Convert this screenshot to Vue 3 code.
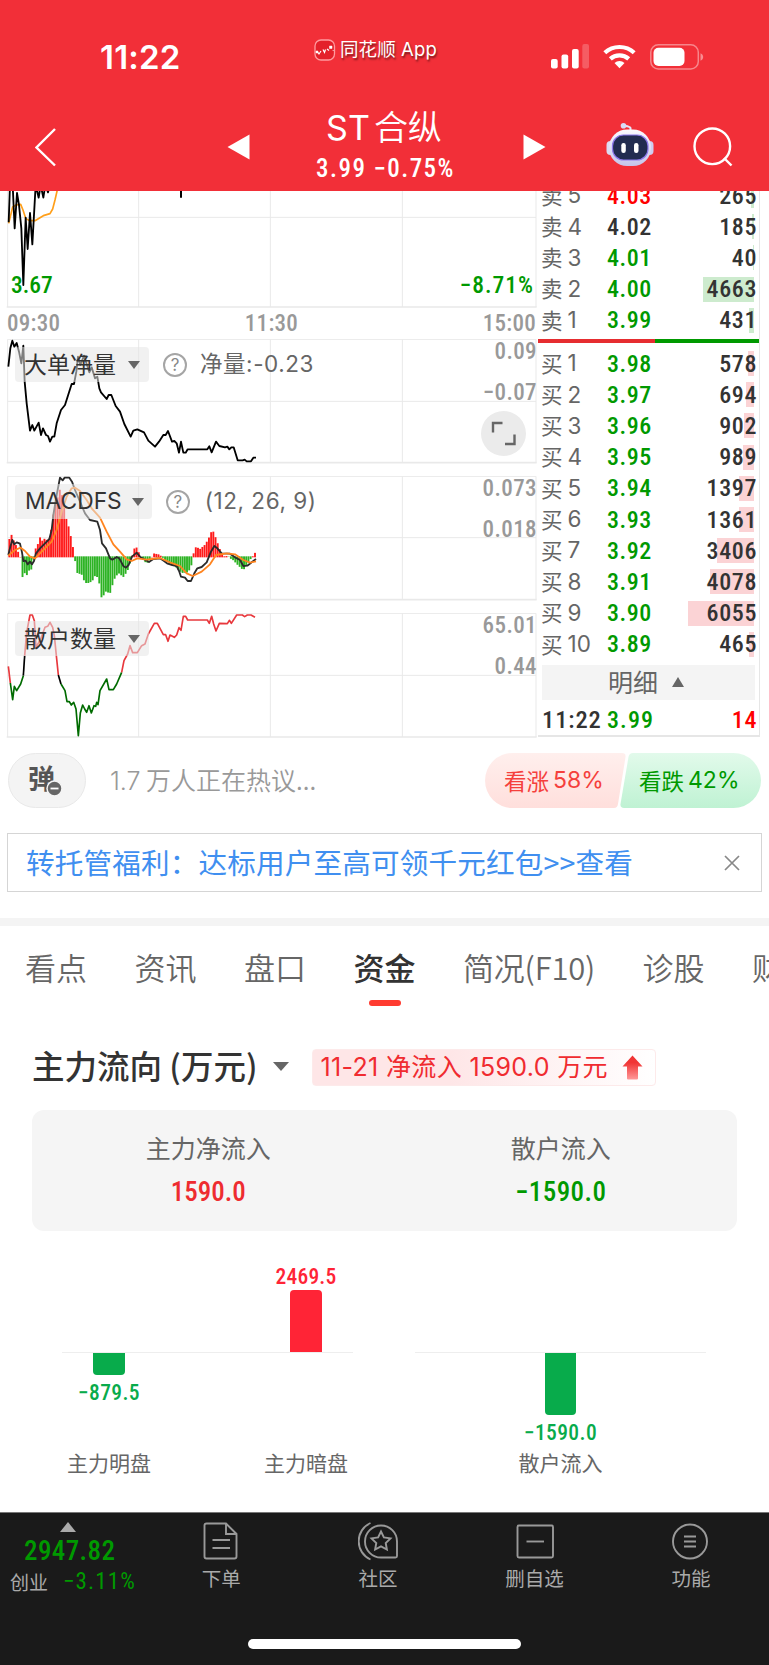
<template>
  <div class="app">
    <header class="header">
      <div class="status-bar">
        <span class="clock">11:22</span>
        <div class="app-tag">
          <svg class="app-logo" width="22" height="22" viewBox="0 0 22 22">
            <rect x="1" y="1" width="19.500" height="20" rx="6" fill="#e4202a" stroke="#ff9a9e" stroke-width="1.300" />
            <path d="M2 13.500h2l1 1.500 2-3" fill="none" stroke="#fff" stroke-width="1.100" />
            <path d="M9 10.500l1.500 3 1-3M13 10l2 1.500" fill="none" stroke="#fff" stroke-width="1.200" />
            <path d="M15.500 7h2.500v2.500h-2.500zM2 12h2v2H2zM18.500 11.500h1.500" fill="#fff" stroke="#fff" stroke-width=".5" />
          </svg>
          <span>同花顺 App</span>
        </div>
        <div class="status-icons">
          <svg width="39" height="25" viewBox="0 0 39 25" fill="#fff">
            <rect x="0" y="15" width="6.700" height="9.500" rx="2" />
            <rect x="10.500" y="10.500" width="6.700" height="14" rx="2" />
            <rect x="21" y="5" width="6.700" height="19.500" rx="2" />
            <rect x="31.300" y="0" width="6.700" height="24.500" rx="2" opacity=".22" />
          </svg>
          <svg width="34" height="25" viewBox="0 0 34 25" fill="none" stroke="#fff" stroke-width="4.200">
            <path d="M1.800 8.800a21.500 21.500 0 0 1 29.400 0" />
            <path d="M7.300 14.900a13.500 13.500 0 0 1 18.400 0" />
            <path d="M16.500 24.200l-5-5.300a7.300 7.300 0 0 1 10 0z" fill="#fff" stroke="none" />
          </svg>
          <svg width="54" height="26" viewBox="0 0 54 26">
            <rect x=".8" y=".8" width="47.500" height="24.200" rx="7.500" fill="none" stroke="#fff" stroke-opacity=".42" stroke-width="1.500" />
            <rect x="3.500" y="3.800" width="31" height="18.200" rx="5" fill="#fff" />
            <path d="M50.500 9.200c3.600 1.500 3.600 6 0 7.500z" fill="#fff" opacity=".45" />
          </svg>
        </div>
      </div>

      <div class="title-bar">
        <svg class="back" width="22" height="40" viewBox="0 0 22 40">
          <path d="M20 2L1.500 20.500l18.500 18" fill="none" stroke="#fff" stroke-width="2.400" />
        </svg>
        <svg class="prev" width="23" height="26" viewBox="0 0 23 26"><path d="M.5 13L22.500.5v25z" fill="#fff" /></svg>
        <div class="stock">
          <div class="stock-name"><span class="latin">ST</span>合纵</div>
          <div class="stock-price num">3.99 −0.75%</div>
        </div>
        <svg class="next" width="23" height="26" viewBox="0 0 23 26"><path d="M22.500 13L.5.5v25z" fill="#fff" /></svg>
        <svg class="robot" width="48" height="44" viewBox="0 0 48 44">
          <defs>
            <linearGradient id="shell" x1="0" y1="0" x2="0" y2="1">
              <stop offset="0" stop-color="#fbfaff" />
              <stop offset="1" stop-color="#c5c4ea" />
            </linearGradient>
          </defs>
          <path d="M24.500 8V5q-1-1.500-5-2" fill="none" stroke="#e6e4f7" stroke-width="2" />
          <circle cx="17.500" cy="2.800" r="2.800" fill="#d9dcf6" />
          <rect x=".5" y="18" width="8" height="14" rx="4" fill="#dcdaf2" />
          <rect x="39.500" y="18" width="8" height="14" rx="4" fill="#cfcdf0" />
          <rect x="3" y="6.500" width="42" height="36.500" rx="18" fill="url(#shell)" />
          <rect x="6.500" y="12" width="35.500" height="25" rx="11" fill="#222c50" stroke="#8c78ea" stroke-width="1.200" />
          <rect x="15.300" y="20" width="4.500" height="10" rx="2.200" fill="#fff" />
          <rect x="28" y="20" width="4.500" height="10" rx="2.200" fill="#fff" />
        </svg>
        <svg class="search" width="40" height="40" viewBox="0 0 40 40" fill="none" stroke="#fff" stroke-width="2.400">
          <circle cx="19.300" cy="19.300" r="17.800" />
          <path d="M31 31l7.500 7.500" />
        </svg>
      </div>
    </header>

    <section class="market">
      <div class="charts">
        <div class="panel price-panel">
          <svg width="538" height="117" viewBox="0 18 1614 351" fill="none" stroke-linejoin="round">
            <path class="grid-line" d="M23 0V366M416 0V366M811 0V366M1207 0V366M1608 0V366M23 97H1608" />
            <path class="grid-line bold" d="M20 366H1610" />
            <path d="M26 115L38 66 48 60 62 58 69 75 77 100 88 107H105L130 92 150 86 158 72 165 45 173 10" stroke="#ff9f1a" stroke-width="5" />
            <path d="M26 112L30 0H38L44 130 51 24 57 60 64 130 70 300 77 98 83 192 90 84 97 178 107 0 116 38 122 0 130 38 136 0 144 22 150 0" stroke="#000" stroke-width="5.500" />
            <path d="M543 0V38" stroke="#000" stroke-width="6" />
          </svg>
          <span class="low num">3.67</span>
          <span class="low-pct num">−8.71%</span>
        </div>
        <div class="times num">
          <span>09:30</span><span>11:30</span><span>15:00</span>
        </div>

        <div class="panel">
          <svg width="538" height="125" viewBox="0 462 1614 375" fill="none" stroke-linejoin="round">
            <path class="grid-line" d="M23 463V833M416 463V833M811 463V833M1207 463V833M1608 463V833M23 463H1608M23 649H1608" />
            <path class="grid-line bold" d="M20 833H1610" />
            <path :d="netPath" stroke="#000" stroke-width="5.500" />
          </svg>
          <div class="indicator">
            <span class="pill"><span>大单净量</span><i class="caret"></i></span>
            <span class="help">?</span>
            <span class="param">净量:-0.23</span>
          </div>
          <span class="axis top num">0.09</span>
          <span class="axis mid num">−0.07</span>
          <span class="expand">
            <svg width="25" height="25" viewBox="0 0 25 25" fill="none" stroke="#666" stroke-width="2.400">
              <path d="M2 11.500V2h9.500M14 23h9.500v-9.500" />
            </svg>
          </span>
        </div>

        <div class="panel">
          <svg width="538" height="125" viewBox="0 33 1614 375" fill="none" stroke-linejoin="round">
            <path class="grid-line" d="M23 34V404M416 34V404M811 34V404M1207 34V404M1608 34V404M23 34H1608M23 218H1608" />
            <path class="grid-line bold" d="M20 404H1610" />
            <rect
              v-for="b in macdBars"
              :key="b.x"
              :x="b.x - 2.800"
              :y="b.h > 0 ? 277 - b.h : 274"
              width="5.700"
              :height="Math.abs(b.h)"
              :fill="b.h > 0 ? '#ff1a1a' : '#2db324'"
            />
            <path :d="difPath" stroke="#2b2b2b" stroke-width="5.500" />
            <path :d="deaPath" stroke="#ff841f" stroke-width="5.500" />
          </svg>
          <div class="indicator">
            <span class="pill latin">MACDFS<i class="caret"></i></span>
            <span class="help">?</span>
            <span class="param macd-param">(12, 26, 9)</span>
          </div>
          <span class="axis top num">0.073</span>
          <span class="axis mid num">0.018</span>
        </div>

        <div class="panel last">
          <svg width="538" height="125" viewBox="0 442 1614 375" fill="none" stroke-linejoin="round" stroke-width="5">
            <path class="grid-line" d="M23 443V814M416 443V814M811 443V814M1207 443V814M1608 443V814M23 443H1608M23 629H1608" />
            <path class="grid-line bold" d="M20 814H1610" />
            <path v-for="(s, i) in retailPaths" :key="i" :d="s.d" :stroke="s.color" />
          </svg>
          <div class="indicator">
            <span class="pill"><span>散户数量</span><i class="caret"></i></span>
          </div>
          <span class="axis top num">65.01</span>
          <span class="axis mid num">0.44</span>
        </div>
      </div>

      <div class="book">
        <div class="sells">
          <div v-for="row in sells" :key="row.label" class="row">
            <span class="level"><span>卖</span><b>{{ row.label }}</b></span>
            <span class="price num" :class="row.tone">{{ row.price }}</span>
            <span class="bar sell" :style="{ width: volWidth(row.vol) }"></span>
            <span class="vol num">{{ row.vol }}</span>
          </div>
        </div>
        <div class="ratio"><i></i></div>
        <div v-for="row in buys" :key="row.label" class="row">
          <span class="level"><span>买</span><b>{{ row.label }}</b></span>
          <span class="price num">{{ row.price }}</span>
          <span class="bar buy" :style="{ width: volWidth(row.vol) }"></span>
          <span class="vol num">{{ row.vol }}</span>
        </div>
        <div class="detail"><span>明细</span><i></i></div>
        <div class="row tick">
          <span class="level num">11:22</span>
          <span class="price num">3.99</span>
          <span class="vol num up">14</span>
        </div>
      </div>
    </section>

    <section class="talk">
      <div class="bullet">
        弹
        <svg width="17" height="17" viewBox="0 0 17 17">
          <circle cx="8.500" cy="8.500" r="7.500" fill="#666" stroke="#f4f4f4" stroke-width="1.500" />
          <path d="M4.500 8.500h8" stroke="#fff" stroke-width="1.800" />
        </svg>
      </div>
      <span class="talk-text"><span class="latin">1.7</span> 万人正在热议...</span>
      <div class="votes">
        <svg class="vote-bg" width="276" height="55" viewBox="0 0 276 55">
          <defs>
            <linearGradient id="rise" x1="0" y1="0" x2="0" y2="1">
              <stop offset="0" stop-color="#ffefed" />
              <stop offset="1" stop-color="#ffdfdc" />
            </linearGradient>
            <linearGradient id="fall" x1="0" y1="0" x2="0" y2="1">
              <stop offset="0" stop-color="#e2faeb" />
              <stop offset="1" stop-color="#bff2d3" />
            </linearGradient>
          </defs>
          <path d="M27.500 0H137q4 0 3.500 4L133 51q-.6 4-4 4H27.500a27.500 27.500 0 0 1 0-55z" fill="url(#rise)" />
          <path d="M148 0h100.500a27.500 27.500 0 0 1 0 55H139q-4 0-3.500-4L143.500 4q.7-4 4.500-4z" fill="url(#fall)" />
        </svg>
        <span class="vote rise"><span>看涨</span><b>58%</b></span>
        <span class="vote fall"><span>看跌</span><b>42%</b></span>
      </div>
    </section>

    <div class="notice">
      <span>转托管福利：达标用户至高可领千元红包&gt;&gt;查看</span>
      <svg width="16" height="16" viewBox="0 0 16 16"><path d="M1 1l14 14M15 1L1 15" stroke="#888" stroke-width="1.700" /></svg>
    </div>

    <nav class="tabs">
      <span v-for="tab in tabs" :key="tab" :class="{ active: tab === '资金' }">{{ tab }}</span>
    </nav>

    <section class="flow">
      <div class="flow-head">
        <h2>主力流向<span> (万元)</span></h2>
        <i class="caret"></i>
        <div class="flow-badge">
          <span>11-21 净流入 1590.0 万元</span>
          <svg width="21" height="25" viewBox="0 0 21 25">
            <defs>
              <linearGradient id="arrow" x1="0" y1="0" x2="0" y2="1">
                <stop offset=".3" stop-color="#f03535" />
                <stop offset="1" stop-color="#f99" />
              </linearGradient>
            </defs>
            <path d="M10.500.5l10 11h-4.500v12q0 1-1 1h-9q-1 0-1-1v-12H.5z" fill="url(#arrow)" />
          </svg>
        </div>
      </div>

      <div class="summary">
        <div><p>主力净流入</p><strong class="num up">1590.0</strong></div>
        <div><p>散户流入</p><strong class="num down">−1590.0</strong></div>
      </div>

      <div class="flow-chart">
        <div v-for="(group, i) in flowGroups" :key="i" class="group">
          <div v-for="item in group" :key="item.name" class="item" :class="item.value > 0 ? 'pos' : 'neg'">
            <div class="upper">
              <template v-if="item.value > 0">
                <span class="num">{{ item.value.toFixed(1) }}</span>
                <i :style="{ height: item.height + 'px' }"></i>
              </template>
            </div>
            <div class="lower">
              <template v-if="item.value < 0">
                <i :style="{ height: item.height + 'px' }"></i>
                <span class="num">−{{ Math.abs(item.value).toFixed(1) }}</span>
              </template>
            </div>
            <p>{{ item.name }}</p>
          </div>
        </div>
      </div>
    </section>

    <footer class="footer">
      <div class="footer-row">
        <div class="index">
          <i></i>
          <strong class="num">2947.82</strong>
          <div class="index-line"><span>创业</span><em class="num">−3.11%</em></div>
        </div>
        <div class="nav-item">
          <svg width="40" height="40" viewBox="0 0 40 40">
            <path d="M5.500 2.500h19.500l10.500 10.500v22.500q0 2-2 2h-28q-2 0-2-2V4.500q0-2 2-2zM25 2.500V13h10.500M11.500 19H29M11.500 27H29" />
          </svg>
          <span>下单</span>
        </div>
        <div class="nav-item">
          <svg width="40" height="40" viewBox="0 0 40 40">
            <path d="M39 20.500v14.500q0 1.500-1.500 1.500H23A16 16 0 1 1 39 20.500z" />
            <path d="M12.500 2a20 20 0 0 0 0 36.500" />
            <path d="M23 10.500l2.900 6 6.600.9-4.800 4.600 1.200 6.500-5.900-3.100-5.900 3.100 1.200-6.500-4.800-4.600 6.600-.9z" />
          </svg>
          <span>社区</span>
        </div>
        <div class="nav-item">
          <svg width="40" height="40" viewBox="0 0 40 40">
            <rect x="3.500" y="4.500" width="35.500" height="32" rx="1.500" />
            <path d="M12.500 20.500H30" />
          </svg>
          <span>删自选</span>
        </div>
        <div class="nav-item">
          <svg width="40" height="40" viewBox="0 0 40 40">
            <circle cx="19" cy="20.500" r="17" />
            <path d="M13 15.500h12M13 20.500h12M13 25.500h12" />
          </svg>
          <span>功能</span>
        </div>
      </div>
      <div class="home-bar"></div>
    </footer>
  </div>
</template>

<script setup>
const sells = [
  { label: 5, price: '4.03', vol: 265, tone: 'up' },
  { label: 4, price: '4.02', vol: 185, tone: 'flat' },
  { label: 3, price: '4.01', vol: 40 },
  { label: 2, price: '4.00', vol: 4663 },
  { label: 1, price: '3.99', vol: 431 }
]

const buys = [
  { label: 1, price: '3.98', vol: 578 },
  { label: 2, price: '3.97', vol: 694 },
  { label: 3, price: '3.96', vol: 902 },
  { label: 4, price: '3.95', vol: 989 },
  { label: 5, price: '3.94', vol: 1397 },
  { label: 6, price: '3.93', vol: 1361 },
  { label: 7, price: '3.92', vol: 3406 },
  { label: 8, price: '3.91', vol: 4078 },
  { label: 9, price: '3.90', vol: 6055 },
  { label: 10, price: '3.89', vol: 465 }
]

const volWidth = (vol) => Math.max(1, (vol / 6055) * 66) + 'px'

const tabs = ['看点', '资讯', '盘口', '资金', '简况(F10)', '诊股', '财务']

const flowGroups = [
  [
    { name: '主力明盘', value: -879.5, height: 22 },
    { name: '主力暗盘', value: 2469.5, height: 62 }
  ],
  [{ name: '散户流入', value: -1590, height: 62 }]
]

const netPath =
  'M25 545L31 490 37 467 43 485 50 474 57 500 64 535 70 482 74 590 80 655 90 737 97 720 103 737 116 713 123 750 129 730 138 750 144 753 150 770 157 755 163 755 170 715 183 675 195 660 215 597 222 597 229 560 234 515 241 540 252 512 268 562 275 547 285 580 292 575 298 610 303 622 320 642 326 630H334L347 663 360 680 373 717 392 755 400 737 412 733 432 742 445 767 465 785 477 770 490 750H497L504 738 516 770 523 768 530 775 537 803 543 770 550 803H557L563 793H622L628 784 635 802 648 770 658 783 675 787 682 785 688 793 694 787 701 787 713 826H728L734 824 740 829H753L760 818H768'

const difPath =
  'M25 270L31 245 37 225 43 238 50 232 60 236 66 262 70 288 77 287 83 298 90 290 96 298 102 288 108 265 120 250 135 235 148 222 155 195 160 150 170 90 180 38 188 46 194 38H208L216 50 225 75 240 110 255 145 270 165 292 170 300 195 306 235 318 250 330 280 337 284 350 276 358 280 370 303 378 308 386 300 396 275 410 263 420 275 436 285 447 291 460 282 480 280 492 288 503 296 517 300 530 303 538 320 543 335 555 338 563 348H573L583 325 592 310 605 306 620 292 632 262 643 243 652 250 665 265 690 266 705 277 720 285 730 303 742 302 757 290 768 282'

const deaPath =
  'M25 272L45 255 62 248 75 258 90 275 105 280 130 255 155 230 170 195 185 140 200 95 215 70 225 68 240 78 260 105 275 130 300 158 320 200 340 238 360 260 380 283 395 288 412 280 440 284 480 279 510 292 540 303 560 325 578 333 605 320 630 298 648 270 680 265 705 268 730 285 750 293 768 289'

const retailPaths = [
  { color: '#e8383d', d: 'M25 602L31 652' },
  { color: '#006b00', d: 'M31 652L38 702 43 662 50 675 62 655 70 630' },
  { color: '#000', d: 'M70 630L74 570' },
  { color: '#e8383d', d: 'M74 570L80 500 90 448H97L103 465 108 545 122 520 135 485 143 482 150 470 158 485 163 510 169 570 175 628' },
  { color: '#000', d: 'M175 628L183 655' },
  { color: '#006b00', d: 'M183 655L195 675 201 708 208 708 214 718 221 710 228 730 235 810 241 742 248 718 254 730 260 740 267 720 274 742 282 720 287 722 290 710 294 717 300 675 320 640 327 672H340L350 655 365 620' },
  { color: '#e8383d', d: 'M365 620L372 585 383 565 390 540 398 561H412L425 540 435 535 445 505 463 473H472L490 507H497L504 527 510 508 523 515 530 508 537 486 543 494 550 452H557L563 463H622L628 473 635 452 641 475 648 496 658 473 682 474 688 464 694 473 710 448H727L734 453 742 448H753L765 455' }
]

// [x, height] turning points of the histogram, filled in between
const macdPoints = [
  [28, 55], [36, 70], [44, 40], [50, 35], [57, 5], [62, 0], [68, -68], [76, -45], [83, -62], [90, -30], [96, -45],
  [101, -5], [106, 25], [112, 35], [120, 60], [128, 48], [135, 58], [142, 50], [150, 60], [156, 105], [163, 150],
  [170, 170], [180, 205], [188, 180], [195, 130], [202, 105], [208, 85], [214, 55], [220, 25], [225, -12],
  [232, -50], [245, -55], [255, -80], [268, -80], [278, -72], [287, -55], [296, -70], [305, -127], [318, -105],
  [330, -112], [342, -70], [355, -50], [370, -62], [382, -45], [392, -15], [398, 12], [405, 32], [412, 28],
  [418, 10], [425, -5], [440, -22], [452, -8], [460, 12], [480, 8], [487, -3], [510, -25], [525, -30], [545, -50],
  [565, -48], [575, -25], [580, 10], [588, 32], [600, 25], [615, 38], [625, 55], [634, 77], [642, 77], [648, 55],
  [656, 35], [665, 10], [672, 3], [682, 4], [690, -6], [700, -12], [712, -25], [730, -42], [740, -25], [752, -8],
  [760, 6], [768, 18]
]

const macdBars = []
for (let n = 0; n < 113; n++) {
  const x = 28 + n * 6.58
  const k = Math.max(1, macdPoints.findIndex((p) => p[0] >= x))
  const [x0, h0] = macdPoints[k - 1]
  const [x1, h1] = macdPoints[k]
  macdBars.push({ x, h: h0 + ((h1 - h0) * (x - x0)) / (x1 - x0) })
}
</script>

<style>
body {
  margin: 0;
  background: #fff;
}
</style>

<style scoped>
.app {
  width: 769px;
  height: 1665px;
  overflow: hidden;
  display: flex;
  flex-direction: column;
  font-family: "Noto Sans CJK SC", sans-serif;
  color: #333;
  line-height: 1;
  white-space: nowrap;
}

svg {
  display: block;
  flex-shrink: 0;
}

i {
  display: block;
}

.num {
  font-family: Roboto, sans-serif;
  font-stretch: 87.5%;
  font-weight: 500;
}

.latin {
  font-family: Inter, sans-serif;
}

.up {
  color: #f00;
}

.down {
  color: #090;
}

/* header */
.header {
  height: 191px;
  background: #f22f38;
  color: #fff;
}

.status-bar {
  display: flex;
  align-items: center;
  height: 98px;
}

.clock {
  width: 214px;
  margin: 17px 0 0 100px;
  font: 600 33px/1 Inter, sans-serif;
  letter-spacing: 0.2px;
}

.app-tag {
  display: flex;
  align-items: center;
  gap: 4px;
  width: 237px;
  padding-top: 1px;
  font-family: Inter, "Noto Sans CJK SC", sans-serif;
  font-size: 18.500px;
  letter-spacing: 0.1px;
  text-shadow: 1px 2px 2px rgba(0, 0, 0, 0.5);
}

.status-icons {
  display: flex;
  gap: 13px;
  margin-top: 16px;
}

.title-bar {
  display: flex;
  align-items: center;
  height: 93px;
  padding-left: 35px;
}

.back,
.prev,
.next,
.search {
  margin-top: 4px;
}

.prev {
  margin-left: 170px;
}

.stock {
  width: 273px;
  text-align: center;
}

.stock-name {
  padding: 3px 5px 0 0;
  font-size: 34px;
  font-weight: 350;
  line-height: 44px;
}

.stock-name .latin {
  margin-right: 4px;
  font-weight: 400;
}

.stock-price {
  padding-right: 2px;
  font-size: 25px;
  letter-spacing: 1.45px;
  line-height: 38px;
}

.robot {
  margin-left: 60px;
}

.search {
  margin-left: 39px;
}

/* charts */
.market {
  display: flex;
  height: 546px;
}

.charts {
  width: 538px;
}

.panel {
  position: relative;
  height: 125px;
  margin-bottom: 12px;
}

.price-panel {
  height: 117px;
  margin: 0;
}

.panel.last {
  margin: 0;
}

.grid-line {
  stroke: #e9e9e9;
  stroke-width: 3;
}

.grid-line.bold {
  stroke-width: 5;
}

.low,
.low-pct {
  position: absolute;
  top: 83px;
  left: 11px;
  font-size: 23.500px;
  color: #090;
}

.low-pct {
  left: auto;
  right: 4px;
  letter-spacing: 1px;
}

.times {
  display: flex;
  justify-content: space-between;
  align-items: center;
  height: 30px;
  padding: 0 2px 1px 7px;
  font-size: 23px;
  letter-spacing: 0.3px;
  color: #999;
}

.indicator {
  position: absolute;
  top: 8px;
  left: 15px;
  display: flex;
  align-items: center;
  height: 35px;
}

.pill {
  display: flex;
  align-items: center;
  height: 35px;
  padding: 0 9px 0 10px;
  border-radius: 4px;
  background: rgba(230, 230, 230, 0.55);
  font-size: 23px;
}

.pill span {
  margin: -2px 0 0 -1px;
}

.pill.latin {
  padding-right: 8px;
  font-size: 22.800px;
}

.caret {
  width: 0;
  margin-left: 12px;
  border: 6px solid transparent;
  border-top: 8px solid #666;
  border-bottom: 0;
}

.pill.latin .caret {
  margin-left: 10px;
}

.help {
  width: 20px;
  height: 20px;
  margin: 0 13px 0 14px;
  border: 2px solid #a5a5a5;
  border-radius: 50%;
  font: 17px/20px Inter, sans-serif;
  color: #888;
  text-align: center;
}

.param {
  margin-top: -1px;
  font: 22.500px/1 Inter, "Noto Sans CJK SC", sans-serif;
  letter-spacing: 0.55px;
  color: #666;
}

.macd-param {
  margin-left: 2px;
}

.axis {
  position: absolute;
  right: 1px;
  font-size: 23px;
  letter-spacing: 0.4px;
  color: #999;
}

.axis.top {
  top: 1px;
}

.axis.mid {
  top: 42px;
}

.expand {
  position: absolute;
  top: 72px;
  left: 481px;
  display: grid;
  place-items: center;
  width: 45px;
  height: 45px;
  border-radius: 50%;
  background: #ebebeb;
}

/* order book */
.book {
  box-sizing: border-box;
  width: 222px;
  overflow: hidden;
  border-right: 1.500px solid #e6e6e6;
  border-bottom: 2px solid #e6e6e6;
}

.sells {
  display: flex;
  flex-direction: column;
  justify-content: flex-end;
  height: 145px;
  overflow: hidden;
}

.row {
  display: flex;
  align-items: center;
  flex-shrink: 0;
  position: relative;
  height: 31.200px;
  padding: 0 2px 0 4px;
}

.level {
  display: flex;
  align-items: center;
  width: 65px;
  font-size: 21.500px;
  color: #666;
}

.level > span {
  margin: -2px 0 0 -1px;
}

.level b {
  margin-left: 5px;
  font: 400 22.500px/1 Inter, sans-serif;
}

.price {
  font-size: 24px;
  letter-spacing: 0.5px;
  color: #090;
}

.price.up {
  color: #f00;
}

.price.flat {
  color: #333;
}

.vol {
  position: relative;
  margin-left: auto;
  font-size: 24px;
  letter-spacing: 0.6px;
}

.bar {
  position: absolute;
  right: 5px;
  top: 3px;
  height: 25px;
}

.sell {
  background: #cdebce;
}

.buy {
  background: #fbd3d5;
}

.ratio {
  height: 4px;
  margin: 3px 0 5px;
  background: #090;
}

.ratio i {
  width: 117px;
  height: 4px;
  background: #e62d30;
}

.detail {
  display: flex;
  align-items: center;
  justify-content: center;
  height: 35px;
  margin: 5px 4px 0;
  padding-right: 5px;
  box-sizing: border-box;
  background: #f4f4f4;
  font-size: 25px;
  color: #666;
}

.detail span {
  margin-top: -2px;
}

.detail i {
  margin-left: 14px;
  border: 6.500px solid transparent;
  border-top: 0;
  border-bottom: 10px solid #666;
}

.tick {
  height: 41px;
}

.tick .level {
  color: #333;
  font-size: 24.500px;
  letter-spacing: 0.9px;
}

.tick .price {
  letter-spacing: 1.1px;
}

/* discussion */
.talk {
  display: flex;
  align-items: center;
  height: 55px;
  margin-top: 16px;
  padding-left: 8px;
}

.bullet {
  position: relative;
  box-sizing: border-box;
  width: 78px;
  height: 55px;
  padding-left: 19px;
  border: 1.500px solid #e9e9e9;
  border-radius: 28px;
  background: #f4f4f4;
  font-size: 27px;
  font-weight: 700;
  line-height: 48px;
  color: #555;
}

.bullet svg {
  position: absolute;
  left: 37px;
  top: 26px;
}

.talk-text {
  width: 375px;
  margin: -1px 0 0 24px;
  font-size: 25px;
  font-weight: 350;
  color: #999;
}

.votes {
  position: relative;
  display: flex;
  width: 276px;
  height: 55px;
}

.vote-bg {
  position: absolute;
}

.vote {
  position: relative;
  display: flex;
  align-items: center;
  width: 116px;
  padding-left: 19px;
  font-size: 22.500px;
  color: #f5403c;
}

.vote span {
  margin-top: -1px;
}

.vote b {
  margin-left: 4px;
  font: 400 23px/1 Inter, sans-serif;
}

.vote.fall {
  color: #090;
}

.notice {
  box-sizing: border-box;
  display: flex;
  align-items: center;
  justify-content: space-between;
  height: 59px;
  margin: 25px 7px 0 7px;
  padding: 0 21px 0 18px;
  border: 1.500px solid #d5d5d5;
  font-size: 28.600px;
  letter-spacing: 0.15px;
  color: #408ff0;
}

.notice span {
  margin-top: -1px;
}

/* tabs */
.tabs {
  display: flex;
  gap: 47.500px;
  margin-top: 26px;
  padding: 22px 0 0 25px;
  height: 88px;
  border-top: 8px solid #f4f4f4;
  font-size: 31px;
  line-height: 38px;
  font-weight: 350;
  color: #666;
}

.tabs span {
  flex-shrink: 0;
}

.tabs span:nth-child(5) {
  letter-spacing: -0.2px;
}

.tabs .active {
  display: flex;
  flex-direction: column;
  align-items: center;
  font-weight: 500;
  color: #333;
}

.active::after {
  content: "";
  width: 32px;
  height: 6px;
  margin-top: 14px;
  border-radius: 3px;
  background: #ff3b30;
}

/* money flow */
.flow {
  padding: 0 32px;
}

.flow-head {
  display: flex;
  align-items: center;
  height: 37px;
  margin-top: 12px;
}

h2 {
  margin: -2px 0 0;
  font-size: 32.500px;
  font-weight: 500;
}

.flow-head .caret {
  margin: 0 23px 0 16px;
  border-width: 9px 8px 0;
}

.flow-badge {
  box-sizing: border-box;
  display: flex;
  align-items: center;
  justify-content: space-between;
  width: 344px;
  height: 37px;
  margin-top: 1px;
  padding: 0 12px 0 7px;
  border: 1.500px solid #fdeaea;
  border-radius: 4px;
  background: linear-gradient(90deg, #fee6e7 40%, #fff);
  font-family: Inter, "Noto Sans CJK SC", sans-serif;
  font-size: 25px;
  letter-spacing: 0.35px;
  color: #f02b30;
}

.summary {
  display: flex;
  height: 121px;
  margin-top: 25px;
  border-radius: 12px;
  background: #f5f5f5;
  text-align: center;
}

.summary div {
  width: 50%;
}

.summary p {
  margin: 24px 0 18px;
  font-size: 25px;
  line-height: 27px;
  color: #666;
}

.summary strong {
  font-size: 27px;
}

.summary .down {
  letter-spacing: 0.4px;
}

.summary .up {
  color: #ee2c30;
}

.flow-chart {
  display: flex;
  gap: 62px;
  padding: 34px 0 0 30px;
}

.group {
  position: relative;
  display: flex;
  justify-content: center;
  gap: 104px;
  width: 291px;
}

.group::before {
  content: "";
  position: absolute;
  top: 87px;
  left: 0;
  right: 0;
  height: 1px;
  background: #eee;
}

.item {
  position: relative;
  width: 93px;
  text-align: center;
  font-size: 21.500px;
}

.item i {
  width: 31.500px;
  margin: 0 auto;
  background: #08ab4b;
  border-radius: 0 0 4px 4px;
}

.upper {
  display: flex;
  flex-direction: column;
  justify-content: flex-end;
  height: 87px;
}

.lower {
  height: 99px;
  padding-top: 1px;
}

.lower span {
  display: block;
  margin-top: 7px;
  letter-spacing: 0.4px;
}

.upper span {
  margin-bottom: 3px;
  letter-spacing: 0.2px;
}

.pos i {
  background: #ff2436;
  border-radius: 4px 4px 0 0;
}

.pos .num {
  color: #ff2436;
}

.neg .num {
  color: #08ab4b;
}

.item p {
  margin: -1px -5px 0;
  font-size: 21px;
  line-height: 23px;
  color: #666;
}

/* footer */
.footer {
  box-sizing: border-box;
  height: 153px;
  margin-top: auto;
  border-top: 1px solid #777;
  background: #1a1a1a;
}

.footer-row {
  display: flex;
  height: 126px;
}

.index {
  width: 143px;
  flex-shrink: 0;
  color: #090;
}

.index > i {
  width: 0;
  margin: 9px 0 6px 60px;
  border: 8.500px solid transparent;
  border-top: 0;
  border-bottom: 10px solid #aaa;
}

.index strong {
  display: block;
  margin-left: 24px;
  font-size: 27px;
  letter-spacing: 0.4px;
}

.index-line {
  display: flex;
  align-items: center;
  gap: 15px;
  margin: 5px 0 0 10px;
  font-size: 19px;
  color: #aaa;
}

.index-line em {
  font-size: 23px;
  font-style: normal;
  font-weight: 400;
  letter-spacing: 1.100px;
  color: #090;
}

.nav-item {
  display: flex;
  flex-direction: column;
  align-items: center;
  flex-shrink: 0;
  width: 156.600px;
  padding-top: 8px;
  font-size: 19.500px;
  color: #aaa;
}

.nav-item svg {
  fill: none;
  stroke: #999;
  stroke-width: 1.900;
  margin-bottom: 7px;
}

.home-bar {
  width: 273px;
  height: 10px;
  margin: 0 auto;
  border-radius: 5px;
  background: #fff;
}
</style>
